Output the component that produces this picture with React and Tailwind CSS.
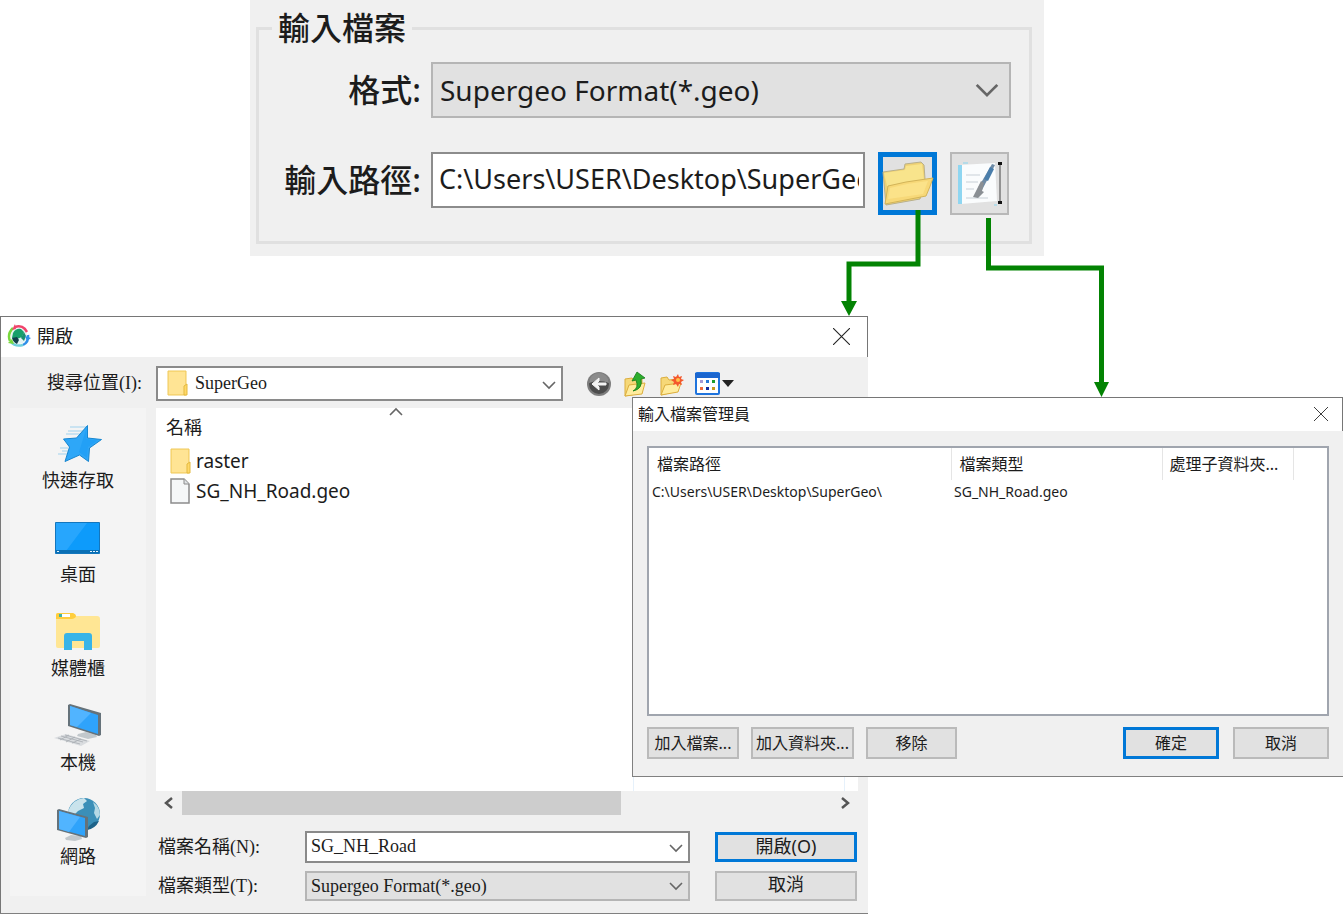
import React, { useState } from 'react';

const PLACES = [
    { id: "quick", label: "快速存取", Icon: StarIcon },
    { id: "desktop", label: "桌面", Icon: DesktopIcon },
    { id: "library", label: "媒體櫃", Icon: LibraryIcon },
    { id: "computer", label: "本機", Icon: ComputerIcon },
    { id: "network", label: "網路", Icon: NetworkIcon },
];

const FILES = [
    { name: "raster", Icon: FolderIcon },
    { name: "SG_NH_Road.geo", Icon: FileIcon },
];

const INPUTS = [
    { path: "C:\\Users\\USER\\Desktop\\SuperGeo\\", type: "SG_NH_Road.geo" },
];

const SANS = "font-['Noto_Sans','Noto_Sans_CJK_TC',sans-serif]";
const SERIF = "font-['Liberation_Serif','Noto_Sans_CJK_TC',serif]";

/* ICONS */
function FolderIcon() {
    return (
        <svg width="22" height="26" viewBox="0 0 22 26" aria-hidden="true">
            <path d="M1 1h18v24H1z" fill="#ffe08a" stroke="#efc95a" />
            <path d="M2 2h16v22H2z" fill="#ffe494" />
            <path d="M17 16l3-2v11h-3z" fill="#ffd868" stroke="#e3b93f" />
        </svg>
    );
}

function FileIcon() {
    return (
        <svg width="22" height="26" viewBox="0 0 22 26" aria-hidden="true">
            <path d="M1 1h13l5 5v19H1z" fill="#f5f7f8" stroke="#8c8c8c" strokeWidth="1.5" />
            <path d="M14 1v5h5" fill="#dfe3e6" stroke="#8c8c8c" />
        </svg>
    );
}

function StarIcon() {
    return (
        <svg width="48" height="48" viewBox="0 0 48 48" aria-hidden="true">
            <g stroke="#8ccbee" strokeWidth="1.2" opacity="0.8">
                <path d="M16 7h16M14 11h17M12 14h16M6 28h8M4 34h9M8 31h6" />
            </g>
            <path d="M33.500 5.500V18l14 1.500-12 8.500-1 13.500-9-6.500-14.500 6.500 4.500-14.500-6-8 13-1z" fill="#2ea7f8" stroke="#1786d0" strokeLinejoin="round" />
            <path d="M32.500 8v11l11 1.500-9.500 6.500-1 11-8-6z" fill="#22a0f6" />
        </svg>
    );
}

function DesktopIcon() {
    return (
        <svg width="48" height="48" viewBox="0 0 48 48" aria-hidden="true">
            <path d="M1.500 8.500h44v31h-44z" fill="#0d9bfb" stroke="#1376bd" />
            <path d="M2 9h31L12 37H2z" fill="#27a6fd" />
            <path d="M2 36h43v3H2z" fill="#0a6fb5" />
            <path d="M3 37h2v1H3zM36 37h2v1h-2zM39 37h2v1h-2zM42 37h2v1h-2z" fill="#e6f5ff" />
        </svg>
    );
}

function LibraryIcon() {
    return (
        <svg width="48" height="48" viewBox="0 0 48 48" aria-hidden="true">
            <path d="M4 5h15l3 3h21q3 0 3 3v27q0 2-2 2H4q-2 0-2-2V7q0-2 2-2z" fill="#ffe694" />
            <path d="M4 5h15q3 1 3 3t-4 3H2V7q0-2 2-2z" fill="#ffce3d" />
            <path d="M8 6h8v3H8z" fill="#fff" />
            <path d="M5 6h3v3H5z" fill="#3fb3a8" />
            <path d="M10 42V28q0-3 3-3h22q3 0 3 3v14h-8v-9H18v9z" fill="#38b4e8" />
        </svg>
    );
}

function ComputerIcon() {
    return (
        <svg width="48" height="48" viewBox="0 0 48 48" aria-hidden="true">
            <path d="M24 32l8-2 10 3 1 2-9 2-11-3z" fill="#c2c8cc" />
            <path d="M0 36l12-4 24 7-9 5z" fill="#d9dcdf" />
            <path d="M4 36l22 6M7 34l22 6M11 33l22 6M6 38l9-5M12 40l9-5M18 41l9-4" stroke="#a7acb1" strokeWidth="0.8" fill="none" />
            <path d="M14 3l2-1 31 9v22l-2 1-31-10z" fill="#65727a" />
            <path d="M16 4l28 9v19L16 23z" fill="#2fa3fb" />
            <path d="M16 4l21 7-14 14-7-2z" fill="#51b4ff" />
        </svg>
    );
}

function NetworkIcon() {
    return (
        <svg width="48" height="48" viewBox="0 0 48 48" aria-hidden="true">
            <circle cx="30" cy="18" r="16" fill="#3b8fb8" />
            <path d="M14 15Q19 3 30 2l3 3-4 3 1 4-6 3-5 5-5-1z" fill="#c9e3ec" />
            <path d="M39 6q7 5 7 13l-3 4-3-6 1-5z" fill="#b5d9e6" />
            <path d="M33 34q8-1 12-9l-5 1-5 4z" fill="#1e6389" />
            <path d="M11 42l6-3 10 1 1 3-7 2-9-1z" fill="#c2c8cc" />
            <path d="M3 14l2-1 29 8v20l-2 1-29-8z" fill="#65727a" />
            <path d="M5 15l26 7v18L5 33z" fill="#2fa3fb" />
            <path d="M5 15l21 6-11 15-10-3z" fill="#51b4ff" />
        </svg>
    );
}

function AppIcon() {
    return (
        <svg width="24" height="24" viewBox="0 0 24 24" aria-hidden="true">
            <circle cx="12" cy="12" r="8" fill="#e4f3f4" />
            <path d="M6 9q3-5 8-4l3 3-2 5-5 2-5-1z" fill="#18a06a" />
            <path d="M5 14l5-1 2 3-2 4q-4-2-5-6z" fill="#123f4c" />
            <path d="M17 8l2 4-2 5-3-3z" fill="#1a8f70" />
            <g fill="none" strokeWidth="2.5">
                <path d="M8 3q6-2 10 2l2 3" stroke="#f0446b" />
                <path d="M3 17Q0 10 6 4" stroke="#79d83c" />
                <path d="M21 11q1 7-5 10" stroke="#2f8fe8" />
                <path d="M4 18q4 5 12 3" stroke="#6fd0dc" />
            </g>
            <path d="M8 0l1 5-4 1z" fill="#f0446b" />
            <path d="M1 19l4-4 2 5z" fill="#79d83c" />
            <path d="M24 14l-4 3-2-5z" fill="#2f8fe8" />
        </svg>
    );
}

function BackIcon() {
    return (
        <svg width="26" height="26" viewBox="0 0 26 26" aria-hidden="true">
            <circle cx="13" cy="13" r="12" fill="#7d7d7d" />
            <circle cx="13" cy="13" r="10" fill="#4c4c4c" />
            <path d="M3 12a10 10 0 0 1 20 0q-10-4-20 0z" fill="#8b8b8b" />
            <path d="M13 7l-7 6 7 6v-3l-2-2h9v-2h-9l2-2z" fill="#f3f3f3" stroke="#f3f3f3" />
        </svg>
    );
}

function UpFolderIcon() {
    return (
        <svg width="26" height="26" viewBox="0 0 26 26" aria-hidden="true">
            <path d="M3 8l7-1 2 2 8-1v14L3 25z" fill="#f6d878" stroke="#dcae3e" />
            <path d="M3 25l4-11 16-2-3 11z" fill="#ffec9e" stroke="#dcae3e" />
            <path d="M11 20q6-3 3-11l-4 1 5-9 8 6-4 1q2 10-8 12z" fill="#2dae2d" stroke="#137a17" strokeWidth="0.8" />
        </svg>
    );
}

function NewFolderIcon() {
    return (
        <svg width="26" height="26" viewBox="0 0 26 26" aria-hidden="true">
            <path d="M3 7l6-1 2 3 9-1v12L3 24z" fill="#f6d878" stroke="#dcae3e" />
            <path d="M3 24l4-10 16-2-3 9z" fill="#ffec9e" stroke="#dcae3e" />
            <path d="M20 3l1 3 3-1-1 3 3 1-3 2 1 3-3-1-1 3-2-3-3 1 1-3-3-2 3-1-1-3 3 1z" fill="#f4582c" />
            <circle cx="20" cy="9" r="2" fill="#ffc24a" />
        </svg>
    );
}

function ViewIcon() {
    return (
        <svg width="40" height="26" viewBox="0 0 40 26" aria-hidden="true">
            <rect x="2" y="2" width="23" height="21" rx="1" fill="#fff" stroke="#1f74dd" strokeWidth="2" />
            <path d="M1 2h25v5H1z" fill="#1b66cf" />
            <path d="M6 9h3v3H6z" fill="#a79ad4" />
            <path d="M12 9h3v3h-3z" fill="#2a7ad8" />
            <path d="M18 9h3v3h-3z" fill="#1f9d2d" />
            <path d="M6 16h3v3H6z" fill="#ef6a3c" />
            <path d="M12 16h3v3h-3z" fill="#122a9c" />
            <path d="M18 16h3v3h-3z" fill="#c99a1c" />
            <path d="M28 9h12l-6 7z" fill="#222" />
        </svg>
    );
}

function OpenFolderIcon() {
    return (
        <svg width="52" height="46" viewBox="0 0 52 46" className="shrink-0" aria-hidden="true">
            <path d="M1 11l21-3 1-5 16-2 3 3 1 14-5 20-34 6z" fill="#efd274" stroke="#b9b08b" />
            <path d="M2 12l21-3 1-4 16-2 2 16-37 6z" fill="#f8e48c" />
            <path d="M3 43l3-18 18-4 27-4q-3 9-7 18z" fill="#f7d878" stroke="#d3b458" />
            <path d="M6 38l2-11 17-4 21-3-5 13z" fill="#fbe289" />
        </svg>
    );
}

function NotepadIcon() {
    return (
        <svg width="46" height="46" viewBox="0 0 46 46" className="shrink-0" aria-hidden="true">
            <path d="M2 4l36-2 2 38-36 3z" fill="#fafcfd" />
            <path d="M1 4h4v39H1z" fill="#8fd6f1" />
            <path d="M6 2h5M37 44h3" stroke="#b5dbe8" strokeWidth="2" />
            <path d="M9 14h14M9 21h12M9 28h8M9 37h22" stroke="#e1e6ea" strokeWidth="2" />
            <path d="M35 3l3 1-13 25-4-2z" fill="#6f8ba5" />
            <path d="M33 6l4 2-6 12-4-2z" fill="#4a7eab" />
            <path d="M24 20l3 2-2 8 2 1-6 6-5-1 2-4z" fill="#8a8f94" />
            <path d="M43 3v40" stroke="#777" strokeWidth="1.500" />
            <path d="M41 1h4v3h-4zM41 40h4v3h-4z" fill="#111" />
        </svg>
    );
}

function CloseIcon({ size }) {
    return (
        <svg width={size} height={size} viewBox="0 0 16 16" fill="none" stroke="#222" aria-hidden="true">
            <path d="M0 0l16 16M16 0L0 16" />
        </svg>
    );
}

function Chevron({ size = 14, className = "" }) {
    return (
        <svg width={size} height={size} viewBox="0 0 14 14" fill="none" stroke="#666" strokeWidth="1.600" className={className} aria-hidden="true">
            <path d="M1 4l6 6 6-6" />
        </svg>
    );
}

/* green connectors drawn over the windows */
function Connectors() {
    return (
        <svg width="1120" height="400" className="pointer-events-none absolute left-0 top-0" aria-hidden="true">
            <g fill="none" stroke="#038303" strokeWidth="5">
                <path d="M918 210v54h-69v42" />
                <path d="M988.500 218v50h113v120" />
            </g>
            <path d="M841 301h16l-8 15zM1094 382h15l-7.500 15z" fill="#038303" />
        </svg>
    );
}

const PushButton = ({ primary, className, children, ...rest }) => (
    <button
        type="button"
        className={`flex items-center justify-center bg-[#e1e1e1] ${
            primary ? "border-3 border-[#0078d7]" : "border-2 border-[#bababa]"
        } ${className}`}
        {...rest}
    >
        {children}
    </button>
);

const InputPanel = () => (
    <section className={`absolute left-[250px] top-0 w-[794px] bg-[#f0f0f0] pt-1 pr-3 pb-3 pl-1.5 text-[#1c1c1c] ${SANS}`}>
        <fieldset className="border-3 border-[#e0e0e0] pt-2.5 pr-[18px] pb-[26px]">
            <legend className="ml-[13px] px-1.5 text-[32px] leading-12 font-medium">輸入檔案</legend>
            <div className="grid grid-cols-[172px_1fr] gap-y-[34px]">
                <label htmlFor="format" className="pr-2.5 text-right text-[32px] leading-14 font-medium">格式:</label>
                <div className="relative">
                    <select id="format" className="block h-14 w-full appearance-none border-2 border-[#b5b5b5] bg-[#e1e1e1] px-[7px] text-[28px]">
                        <option>Supergeo Format(*.geo)</option>
                    </select>
                    <Chevron size={24} className="pointer-events-none absolute top-4 right-3" />
                </div>
                <label htmlFor="path" className="pr-2.5 text-right text-[32px] leading-14 font-medium">輸入路徑:</label>
                <div className="flex items-start">
                    <div className="h-14 min-w-0 flex-1 border-2 border-[#8c8c8c] bg-white pr-1 pb-1 pl-1.5">
                        <input
                            id="path"
                            type="text"
                            defaultValue="C:\Users\USER\Desktop\SuperGeo\"
                            className="h-full w-full text-[27px] outline-none"
                        />
                    </div>
                    <button type="button" aria-label="開啟" className="ml-[13px] flex h-[63px] w-[59px] items-center justify-center border-5 border-[#0078d7] bg-[#e1e1e1]">
                        <OpenFolderIcon />
                    </button>
                    <button type="button" aria-label="輸入檔案管理員" className="mr-0.5 ml-[13px] flex h-[63px] w-[59px] items-center justify-center border-2 border-[#b8b8b8] bg-[#e1e1e1]">
                        <NotepadIcon />
                    </button>
                </div>
            </div>
        </fieldset>
    </section>
);

const OpenDialog = () => {
    const [fileName, setFileName] = useState("SG_NH_Road");

    return (
        <section className={`absolute top-[316px] left-0 w-[868px] border-b border-[#808080] text-[18px] text-[#1c1c1c] ${SANS}`}>
            <header className="flex h-[41px] items-center border-t border-r border-l border-[#767676] bg-white pr-[17px] pb-0.5 pl-1.5">
                <AppIcon />
                <h1 className="ml-1.5 flex-1">開啟</h1>
                <button type="button" aria-label="關閉">
                    <CloseIcon size={17} />
                </button>
            </header>

            <div className="border-l border-[#767676] bg-[#f0f0f0] pt-[9px] pr-2.5 pb-3 pl-[9px]">
                {/* LOCATION BAR */}
                <div className="flex items-center">
                    <label htmlFor="location" className={`w-[146px] shrink-0 pr-3.5 text-right ${SERIF}`}>搜尋位置(I):</label>
                    <div className="relative w-[407px]">
                        <select id="location" className={`block h-[35px] w-full appearance-none border-2 border-[#8a8a8a] bg-white pl-[37px] text-[18px] ${SERIF}`}>
                            <option>SuperGeo</option>
                        </select>
                        <span className="pointer-events-none absolute top-1 left-[11px]"><FolderIcon /></span>
                        <Chevron className="pointer-events-none absolute top-3 right-[7px]" />
                    </div>
                    <div className="ml-[23px] flex gap-2.5">
                        <button type="button" aria-label="上一步"><BackIcon /></button>
                        <button type="button" aria-label="上一層"><UpFolderIcon /></button>
                        <button type="button" aria-label="新增資料夾"><NewFolderIcon /></button>
                        <button type="button" aria-label="檢視"><ViewIcon /></button>
                    </div>
                </div>

                <div className="mt-[7px] flex items-start gap-2.5">
                    {/* PLACES */}
                    <nav className="flex w-[136px] shrink-0 flex-col bg-[#f4f4f4] pt-3 pb-1.5">
                        {PLACES.map(({ id, label, Icon }) => (
                            <button key={id} type="button" className="flex h-[94px] flex-col items-center leading-6">
                                <Icon />
                                {label}
                            </button>
                        ))}
                    </nav>

                    <div className="min-w-0 flex-1">
                        <div className="flex h-[383px] bg-white">
                            <div className="w-[478px] border-r border-[#e6f1fb]">
                                <table className="w-full text-left">
                                    <thead>
                                        <tr>
                                            <th className="relative h-[38px] pl-2.5 font-normal">
                                                名稱
                                                <Chevron className="absolute top-[-3px] left-[233px] rotate-180" />
                                            </th>
                                        </tr>
                                    </thead>
                                    <tbody>
                                        {FILES.map(({ name, Icon }) => (
                                            <tr key={name}>
                                                <td className="h-[30px] pl-3.5 text-[19px] leading-6">
                                                    <span className="flex items-center gap-1">
                                                        <Icon />
                                                        {name}
                                                    </span>
                                                </td>
                                            </tr>
                                        ))}
                                    </tbody>
                                </table>
                            </div>
                            <div className="w-[211px] border-r border-[#e6f1fb]" />
                        </div>

                        {/* SCROLLBAR */}
                        <div className="flex h-6 items-center px-1.5">
                            <button type="button" aria-label="向左捲動">
                                <svg width="13" height="14" viewBox="0 0 13 14" fill="none" stroke="#555" strokeWidth="2.500"><path d="M10 2L4 7l6 5" /></svg>
                            </button>
                            <div className="mx-[7px] flex h-full flex-1">
                                <div className="h-full w-[439px] bg-[#cdcdcd]" />
                            </div>
                            <button type="button" aria-label="向右捲動">
                                <svg width="13" height="14" viewBox="0 0 13 14" fill="none" stroke="#555" strokeWidth="2.500"><path d="M3 2l6 5-6 5" /></svg>
                            </button>
                        </div>

                        {/* FILE NAME AND TYPE */}
                        <div className={`mt-4 grid grid-cols-[147px_1fr_168px] items-center gap-y-2 pl-0.5 ${SERIF}`}>
                            <label htmlFor="file-name">檔案名稱(N):</label>
                            <div className="relative">
                                <input
                                    id="file-name"
                                    type="text"
                                    value={fileName}
                                    onChange={(e) => setFileName(e.target.value)}
                                    className="block h-8 w-full border-2 border-[#8a8a8a] bg-white px-1 pb-0.5"
                                />
                                <Chevron className="pointer-events-none absolute top-2.5 right-[7px]" />
                            </div>
                            <PushButton primary className={`mr-px ml-[25px] h-[30px] pb-0.5 ${SANS}`}>開啟(O)</PushButton>

                            <label htmlFor="file-type">檔案類型(T):</label>
                            <div className="relative">
                                <select id="file-type" className="block h-[30px] w-full appearance-none border-2 border-[#b5b5b5] bg-[#e1e1e1] px-1">
                                    <option>Supergeo Format(*.geo)</option>
                                </select>
                                <Chevron className="pointer-events-none absolute top-2 right-[7px]" />
                            </div>
                            <PushButton className={`mr-px ml-[25px] h-[30px] pb-1 ${SANS}`}>取消</PushButton>
                        </div>
                    </div>
                </div>
            </div>
        </section>
    );
};

const FileManagerDialog = () => (
    <section className={`absolute top-[397px] right-0 left-[632px] border-b border-l border-[#808080] text-[16px] text-[#1c1c1c] ${SANS}`}>
        <header className="flex h-[34px] items-center justify-between border-t border-r border-[#767676] bg-white pr-3.5 pb-0.5 pl-[5px]">
            <h2>輸入檔案管理員</h2>
            <button type="button" aria-label="關閉">
                <CloseIcon size={14} />
            </button>
        </header>

        <div className="bg-[#f0f0f0] pt-[15px] pr-3.5 pb-[17px] pl-3.5">
            <div className="h-[270px] border-2 border-[#a0a5ae] bg-white">
                <table className="w-full table-fixed text-left">
                    <thead>
                        <tr className="h-8">
                            <th className="w-[302px] border-r border-[#e5e5e5] pl-2 font-normal">檔案路徑</th>
                            <th className="w-[211px] border-r border-[#e5e5e5] pl-2 font-normal">檔案類型</th>
                            <th className="w-[131px] border-r border-[#e5e5e5] pl-[7px] font-normal">處理子資料夾...</th>
                            <th></th>
                        </tr>
                    </thead>
                    <tbody>
                        {INPUTS.map(({ path, type }) => (
                            <tr key={path} className="text-[14px] leading-6">
                                <td className="pl-[3px]">{path}</td>
                                <td className="pl-[3px]">{type}</td>
                                <td></td>
                                <td></td>
                            </tr>
                        ))}
                    </tbody>
                </table>
            </div>

            <div className="mt-[11px] flex gap-3">
                <PushButton className="h-8 w-[92px]">加入檔案...</PushButton>
                <PushButton className="h-8 w-[103px]">加入資料夾...</PushButton>
                <PushButton className="h-8 w-[91px]">移除</PushButton>
                <PushButton primary className="mr-0.5 ml-auto h-8 w-24">確定</PushButton>
                <PushButton className="h-8 w-24">取消</PushButton>
            </div>
        </div>
    </section>
);

const App = () => (
    <main className="relative min-h-screen overflow-hidden bg-white" lang="zh-Hant">
        <InputPanel />
        <OpenDialog />
        <FileManagerDialog />
        <Connectors />
    </main>
);

export default App;
